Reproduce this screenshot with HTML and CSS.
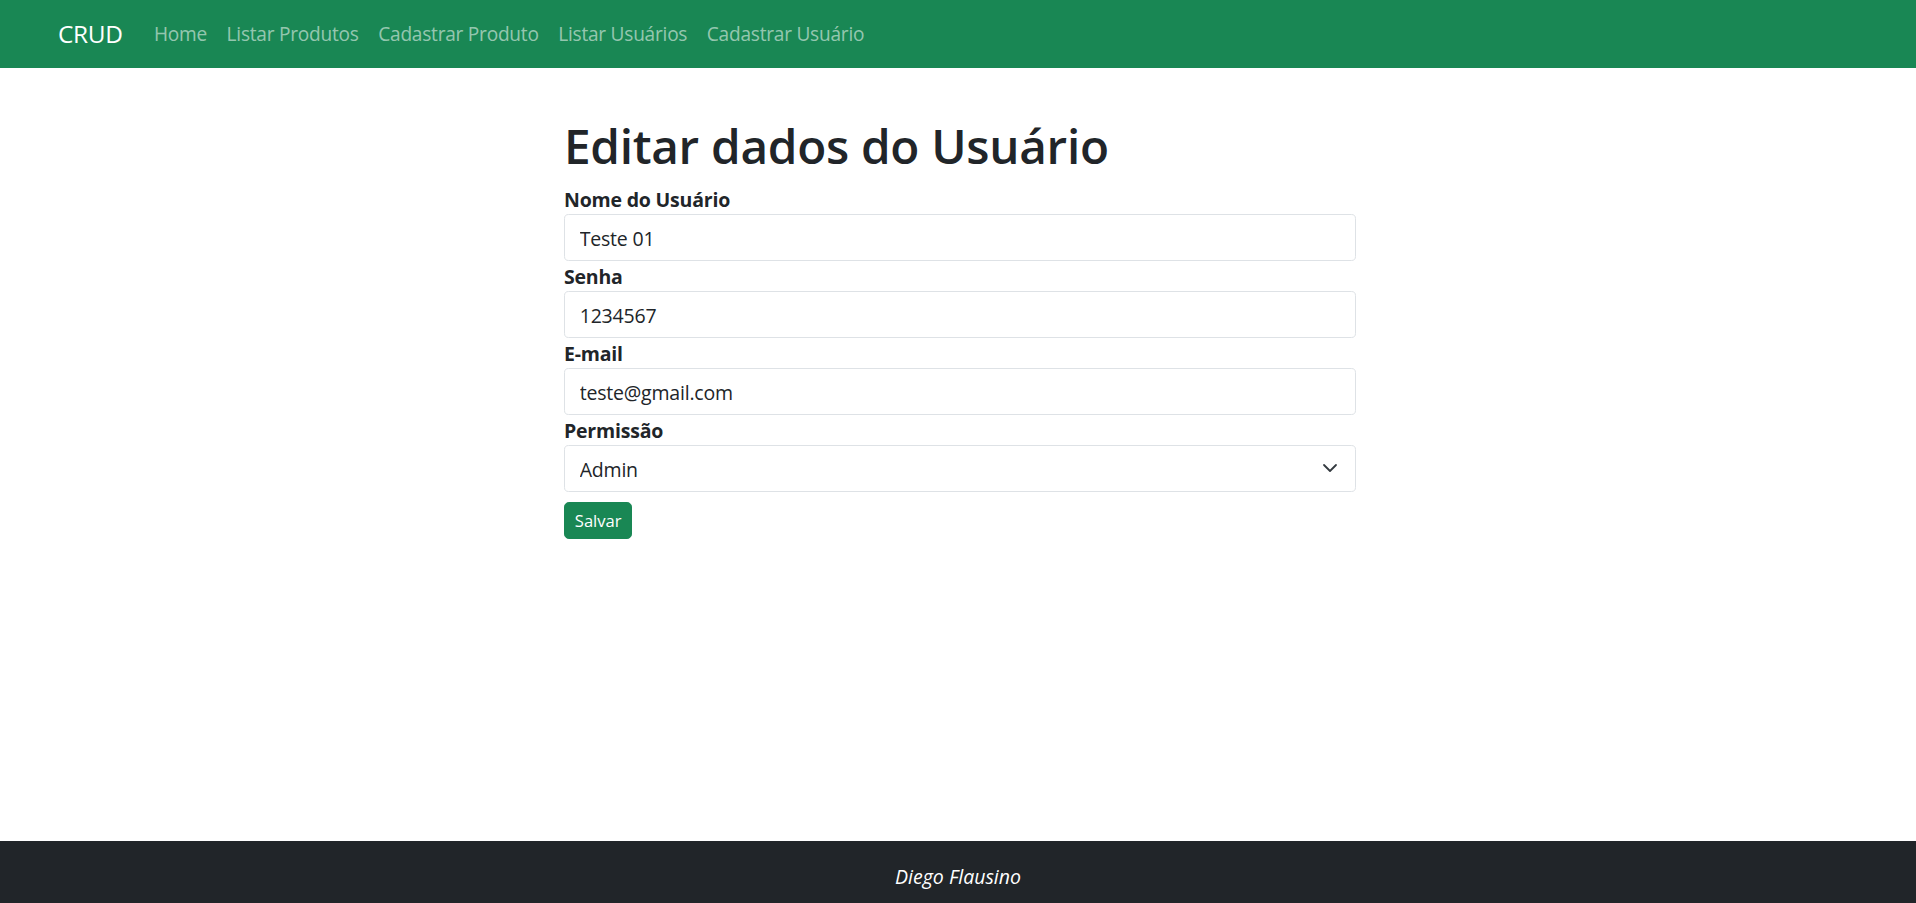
FILE: index.html
```html
<!DOCTYPE html>
<html lang="pt-BR">
<head>
<meta charset="utf-8">
<title>Editar Usuário</title>
<link rel="stylesheet" href="styles.css">
</head>
<body>
<nav class="navbar">
  <div class="nav-inner">
    <a class="brand" href="#">CRUD</a>
    <ul class="nav-links">
      <li><a class="nav-link" href="#">Home</a></li>
      <li><a class="nav-link" href="#">Listar Produtos</a></li>
      <li><a class="nav-link" href="#">Cadastrar Produto</a></li>
      <li><a class="nav-link" href="#">Listar Usuários</a></li>
      <li><a class="nav-link" href="#">Cadastrar Usuário</a></li>
    </ul>
  </div>
</nav>
<main class="main">
  <div class="form-wrap">
    <h1 class="title">Editar dados do Usuário</h1>
    <form class="form">
      <label class="label" for="nome">Nome do Usuário</label>
      <input class="input" id="nome" type="text" value="Teste 01">
      <label class="label" for="senha">Senha</label>
      <input class="input" id="senha" type="text" value="1234567">
      <label class="label" for="email">E-mail</label>
      <input class="input" id="email" type="text" value="teste@gmail.com">
      <label class="label" for="perm">Permissão</label>
      <div class="select-wrap">
        <select class="input select" id="perm">
          <option>Admin</option>
          <option>Usuário</option>
        </select>
        <svg class="chevron" viewBox="0 0 16 16" width="16" height="16" aria-hidden="true">
          <path d="M2 5l6 6 6-6" fill="none" stroke="#343a40" stroke-width="1.8" stroke-linecap="round" stroke-linejoin="round"/>
        </svg>
      </div>
      <button class="btn" type="button">Salvar</button>
    </form>
  </div>
</main>
<footer class="footer">
  <p class="footer-text">Diego Flausino</p>
</footer>
</body>
</html>
```
FILE: styles.css
```css
* { box-sizing: border-box; }

body {
  margin: 0;
  font-family: "Open Sans", "Noto Sans", sans-serif;
  font-size: 19.5px;
  color: #212529;
  background: #fff;
}

.navbar {
  background: #198754;
  height: 68px;
}

.nav-inner {
  height: 100%;
  display: flex;
  align-items: center;
  padding-left: 58px;
}

.brand {
  color: #fff;
  text-decoration: none;
  font-size: 24.4px;
  line-height: 36px;
  margin-right: 21.5px;
  letter-spacing: -0.3px;
}

.nav-links {
  list-style: none;
  margin: 0;
  padding: 0;
  display: flex;
}

.nav-link {
  display: block;
  padding: 8px 9.8px;
  color: rgba(255, 255, 255, 0.55);
  text-decoration: none;
  font-size: 19.1px;
  letter-spacing: -0.24px;
  line-height: 29px;
}

.main {
  min-height: 773px;
  padding-top: 48.5px;
}

.form-wrap {
  width: 792px;
  margin-left: calc(50% - 394px);
}

.title {
  margin: 0 0 8.3px;
  font-size: 47.7px;
  line-height: 58.7px;
  font-weight: 600;
  letter-spacing: -0.3px;
}

.form {
  display: flex;
  flex-direction: column;
  align-items: flex-start;
}

.label {
  display: block;
  font-weight: 700;
  line-height: 28px;
  padding-top: 2px;
  letter-spacing: -0.2px;
}

.input {
  display: block;
  width: 100%;
  height: 47px;
  padding: 2px 14.7px 0;
  border: 1px solid #dee2e6;
  border-radius: 4.6px;
  font-family: inherit;
  font-size: 19.5px;
  letter-spacing: -0.2px;
  color: #212529;
  background: #fff;
}

.select-wrap {
  position: relative;
  width: 100%;
}

.select {
  appearance: none;
  -webkit-appearance: none;
  padding-right: 44px;
}

.chevron {
  position: absolute;
  right: 18px;
  top: 15px;
  pointer-events: none;
}

.btn {
  margin-top: 10px;
  padding: 5.5px 9.8px 4.3px;
  font-family: inherit;
  font-size: 16.6px;
  line-height: 25.7px;
  color: #fff;
  background: #198754;
  border: 1px solid #198754;
  border-radius: 4.9px;
}

.footer {
  background: #212529;
  color: #fff;
  text-align: center;
  padding: 20.5px 0 18.7px;
}

.footer-text {
  margin: 0;
  font-style: italic;
  line-height: 29.3px;
}
```
